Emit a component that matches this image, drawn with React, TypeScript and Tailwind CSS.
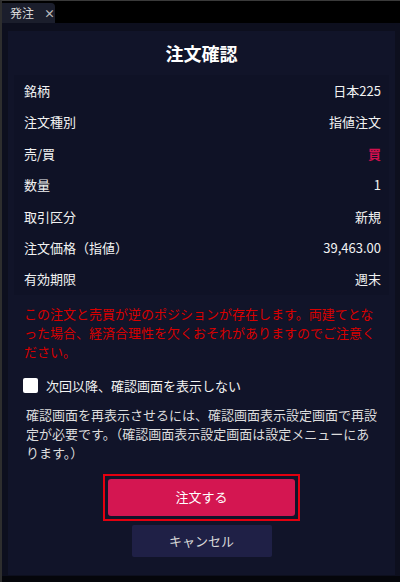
import React from "react";

const rows: { label: string; value: string; red?: boolean }[] = [
  { label: "銘柄", value: "日本225" },
  { label: "注文種別", value: "指値注文" },
  { label: "売/買", value: "買", red: true },
  { label: "数量", value: "1" },
  { label: "取引区分", value: "新規" },
  { label: "注文価格（指値）", value: "39,463.00" },
  { label: "有効期限", value: "週末" },
];

export default function App() {
  return (
    <div
      className="w-[400px] h-[582px] bg-[#05060b] border-t border-t-[#3a3a3a] border-l-2 border-l-[#2e2e2e] flex flex-col overflow-hidden"
      style={{ fontFamily: '"Noto Sans CJK JP", "Noto Sans", sans-serif' }}
    >
      <div className="h-[22px] bg-black flex items-end">
        <div className="w-[53px] h-[20px] bg-[#1b1e2c] rounded-tr-[4px] flex items-center pl-[8px] gap-[10px]">
          <span className="text-[12px] text-[#d8d8d8] leading-none">発注</span>
          <span className="text-[11px] text-[#bbbbbb] font-bold leading-none">×</span>
        </div>
      </div>
      <div className="h-[553px] bg-[#0d0f1e] pt-[8px] pl-[6px] pr-[5px]">
        <div className="h-[544px] bg-[#111429] flex flex-col">
          <div className="h-[44px] flex items-center justify-center text-white font-bold text-[18px]">注文確認</div>
          <div className="mx-[6px] bg-[#0f1226] h-[220px] flex flex-col">
            {rows.map((r) => (
              <div key={r.label} className="h-[31.4px] flex items-center justify-between pl-[10px] pr-[8px] text-[13px]">
                <span className="text-[#f2f2f2]">{r.label}</span>
                <span className={r.red ? "text-[#d0104e] font-bold" : "text-[#f2f2f2]"}>{r.value}</span>
              </div>
            ))}
          </div>
          <div className="px-[16px] pt-[9px] text-[13px] leading-[19px] text-[#d80000]">
            この注文と売買が逆のポジションが存在します。両建てとなった場合、経済合理性を欠くおそれがありますのでご注意ください。
          </div>
          <div className="flex items-center pl-[15px] mt-[15px] gap-[8px]">
            <div className="w-[15px] h-[15px] bg-white rounded-[2px]"></div>
            <span className="text-[13px] text-[#f2f2f2]">次回以降、確認画面を表示しない</span>
          </div>
          <div className="pl-[18px] pr-[14px] pt-[9px] text-[13px] leading-[19px] text-[#dcdcdc]">
            確認画面を再表示させるには、確認画面表示設定画面で再設定が必要です。（確認画面表示設定画面は設定メニューにあります。）
          </div>
          <div className="flex flex-col items-center mt-[12px]">
            <div className="w-[197px] h-[47px] border-2 border-[#e3000f] p-[3px]">
              <button className="w-full h-full bg-[#d41651] rounded-[3px] text-white text-[13px] flex items-center justify-center">
                注文する
              </button>
            </div>
            <button className="mt-[4px] w-[140px] h-[32px] bg-[#1f2046] rounded-[2px] text-[#d8d8d8] text-[13px] flex items-center justify-center">
              キャンセル
            </button>
          </div>
        </div>
      </div>
    </div>
  );
}
